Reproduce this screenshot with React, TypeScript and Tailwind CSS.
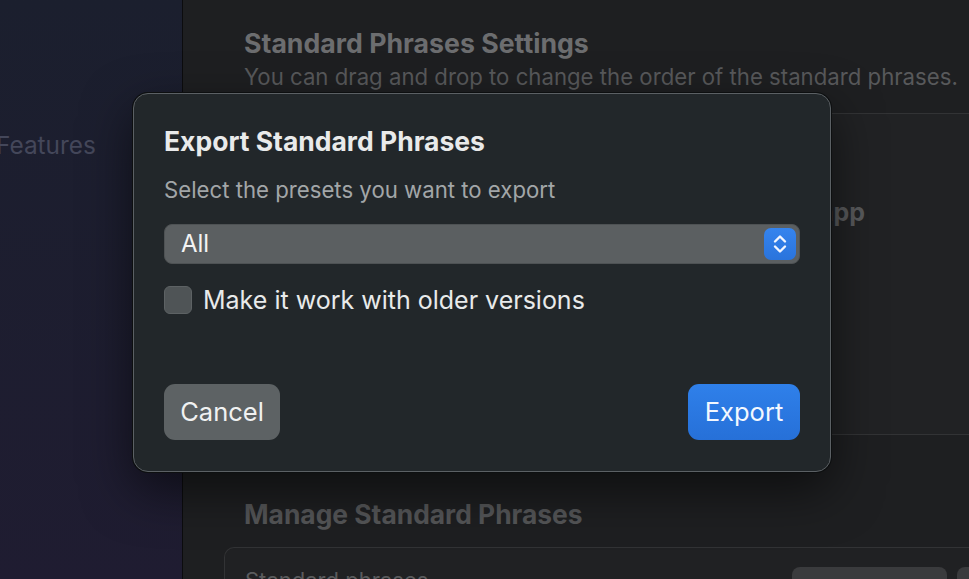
import React from "react";

const FONT = "font-['Inter','Noto_Sans',sans-serif]";

function Stepper() {
  return (
    <div className="flex h-[32px] w-[32px] items-center justify-center rounded-[7px] bg-gradient-to-b from-[#3584ee] to-[#2a74dc]">
      <svg width="18" height="24" viewBox="0 0 18 24" fill="none" aria-hidden>
        <path d="M4 9.5 L9 4.5 L14 9.5" stroke="#f2f6ff" strokeWidth="2.4" strokeLinecap="round" strokeLinejoin="round" />
        <path d="M4 14.5 L9 19.5 L14 14.5" stroke="#f2f6ff" strokeWidth="2.4" strokeLinecap="round" strokeLinejoin="round" />
      </svg>
    </div>
  );
}

function ExportDialog() {
  return (
    <div className="absolute left-[133px] top-[93px] flex h-[379px] w-[698px] flex-col rounded-[15px] border border-[#5b6064] bg-[#22272a] px-[30px] pt-[30px] pb-[31px] shadow-[0_0_0_1px_#0d0f10,0_18px_50px_rgba(0,0,0,0.55)]">
      <h2 className="whitespace-nowrap text-[26.5px] font-bold leading-[34px] text-[#e9eaea]">Export Standard Phrases</h2>
      <p className="mt-[18px] whitespace-nowrap text-[22.2px] leading-[28px] text-[#a2a6a8]">Select the presets you want to export</p>

      <div className="mt-[20px] flex h-[40px] items-center justify-between rounded-[8px] border border-[#4e5254] bg-[#5b5f61] pl-[16px] pr-[3px]">
        <span className="text-[24px] text-[#f3f3f3]">All</span>
        <Stepper />
      </div>

      <label className="mt-[22px] flex items-center gap-[11px]">
        <span className="h-[28px] w-[28px] shrink-0 rounded-[6px] border border-[#5d6264] bg-[#4f5456]" />
        <span className="whitespace-nowrap text-[25px] leading-[28px] text-[#e8eaea]">Make it work with older versions</span>
      </label>

      <div className="mt-auto flex items-center justify-between">
        <button className="h-[56px] w-[116px] rounded-[11px] bg-[#5d6264] text-[25.5px] text-[#f0f1f1]">Cancel</button>
        <button className="h-[56px] w-[112px] rounded-[11px] bg-gradient-to-b from-[#2f80ea] to-[#2670d8] text-[25.5px] text-[#f3f8ff]">Export</button>
      </div>
    </div>
  );
}

export default function App() {
  return (
    <div className={`relative flex h-[579px] w-[969px] overflow-hidden bg-[#1e1f21] ${FONT}`}>
      <aside className="w-[183px] shrink-0 border-r border-[#0c0c0e] bg-gradient-to-b from-[#1b1f2e] to-[#1f1c31] pt-[130px]">
        <div className="-ml-[4px] text-[24.4px] leading-[30px] text-[#44475a]">Features</div>
      </aside>

      <main className="min-w-0 flex-1 pt-[27px]">
        <div className="pl-[61px]">
          <h1 className="whitespace-nowrap text-[26.7px] font-bold leading-[32px] text-[#6c6d6f]">Standard Phrases Settings</h1>
          <p className="mt-[5px] whitespace-nowrap text-[22.2px] leading-[26px] text-[#58595b]">
            You can drag and drop to change the order of the standard phrases.
          </p>
        </div>

        <section className="ml-[41px] mt-[23px] h-[322px] rounded-tl-[10px] border-t border-l border-b border-[#323335] bg-[#212224] pl-[20px] pr-[104px] pt-[80px]">
          <div className="whitespace-nowrap text-right text-[25px] font-bold text-[#58595b]">Set the standard phrases used in each app</div>
        </section>

        <div className="pl-[61px] pt-[63px]">
          <h2 className="whitespace-nowrap text-[26.4px] font-bold leading-[32px] text-[#545557]">Manage Standard Phrases</h2>
        </div>

        <section className="ml-[41px] mt-[17px] h-[60px] rounded-tl-[10px] border-t border-l border-[#323335] bg-[#202123] pl-[20px] pt-[19px]">
          <div className="flex items-start justify-between">
            <span className="whitespace-nowrap text-[22px] leading-[26px] text-[#5a5b5d]">Standard phrases</span>
            <div className="-mr-[18px] flex gap-[10px]">
              <span className="h-[30px] w-[155px] rounded-[8px] bg-[#3a3b3d]" />
              <span className="h-[30px] w-[30px] rounded-[8px] bg-[#3a3b3d]" />
            </div>
          </div>
        </section>
      </main>

      <ExportDialog />
    </div>
  );
}
